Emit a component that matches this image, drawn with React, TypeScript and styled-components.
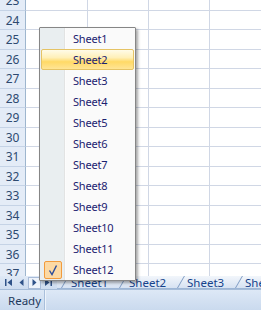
import React from 'react';
import styled, { createGlobalStyle } from 'styled-components';

const GlobalStyle = createGlobalStyle`
  html, body {
    margin: 0;
    padding: 0;
    background: #fff;
    overflow: hidden;
  }
`;

const Window = styled.div`
  position: relative;
  width: 261px;
  height: 310px;
  overflow: hidden;
  display: flex;
  flex-direction: column;
  font-family: "Noto Sans", "Liberation Sans", sans-serif;
`;

const Sheet = styled.div`
  flex: none;
  height: 276px;
  overflow: hidden;
`;

const Rows = styled.div`
  margin-top: -9px;
`;

const Row = styled.div<{ $h: number }>`
  display: grid;
  grid-template-columns: 26px 62px 61px 61px 61px;
  height: ${p => p.$h}px;
`;

const RowHead = styled.div`
  box-sizing: border-box;
  background: #e4ecf7;
  border-right: 1px solid #9eb6ce;
  border-bottom: 1px solid #c5d3e6;
  color: #2e4a70;
  font-size: 12px;
  display: flex;
  align-items: center;
  justify-content: center;
`;

const Cell = styled.div`
  box-sizing: border-box;
  border-right: 1px solid #d0d7e5;
  border-bottom: 1px solid #d0d7e5;
`;

const TabBar = styled.div`
  flex: none;
  height: 13px;
  display: flex;
  background: linear-gradient(#dfe9f6, #cddcef);
`;

const Nav = styled.div`
  flex: none;
  width: 57px;
  display: flex;
  align-items: center;
  padding-left: 2px;
  box-sizing: border-box;
`;

const NavButton = styled.div<{ $hover?: boolean }>`
  width: 13px;
  height: 12px;
  box-sizing: border-box;
  display: flex;
  align-items: center;
  justify-content: center;
  border: 1px solid ${p => (p.$hover ? '#a9bcd8' : 'transparent')};
  background: ${p => (p.$hover ? '#eef3fa' : 'transparent')};
  color: #2f5288;
`;

const Tabs = styled.div`
  display: flex;
  flex: 1;
  overflow: hidden;
  border-bottom: 1px solid #9db6d6;
`;

const Tab = styled.div`
  position: relative;
  flex: none;
  width: 58px;
  box-sizing: border-box;
  padding-left: 14px;
  font-size: 11.5px;
  line-height: 13px;
  color: #15428b;
  background: linear-gradient(#f2f6fb, #d6e2f2);
  white-space: nowrap;

  &::before {
    content: '';
    position: absolute;
    left: 4px;
    bottom: 0;
    height: 12px;
    border-left: 1px solid #7f9cc4;
    transform: skewX(-30deg);
    transform-origin: bottom;
  }
`;

const StatusBar = styled.div`
  flex: none;
  height: 21px;
  box-sizing: border-box;
  border-top: 1px solid #a5bcd8;
  background: linear-gradient(#dde8f6, #cadaee);
  display: flex;
  align-items: center;
`;

const StatusText = styled.div`
  width: 45px;
  box-sizing: border-box;
  padding-left: 8px;
  height: 100%;
  display: flex;
  align-items: center;
  font-size: 11.5px;
  color: #1e395b;
  border-right: 1px solid #a9bfdb;
  box-shadow: 1px 0 0 #eef4fb;
`;

const Menu = styled.div`
  position: absolute;
  left: 39px;
  top: 27px;
  width: 97px;
  box-sizing: border-box;
  border: 1px solid #868686;
  border-radius: 1px;
  box-shadow: 2px 2px 3px rgba(0, 0, 0, 0.35);
  background: linear-gradient(
    to right,
    #e9eef0 0,
    #e9eef0 24px,
    #e2e3e3 24px,
    #e2e3e3 25px,
    #ffffff 25px,
    #fafafa 26px
  );
  display: flex;
  flex-direction: column;
`;

const Item = styled.div<{ $active?: boolean }>`
  height: 21px;
  box-sizing: border-box;
  margin: 0 1px;
  display: grid;
  grid-template-columns: 23px 1fr;
  align-items: center;
  border: 1px solid ${p => (p.$active ? '#e5c365' : 'transparent')};
  border-radius: 2px;
  background: ${p =>
    p.$active
      ? 'linear-gradient(#fffbe8 0%, #fff0b8 40%, #ffd966 62%, #ffe596 100%)'
      : 'transparent'};
`;

const Label = styled.span`
  padding-left: 8px;
  font-size: 11px;
  letter-spacing: -0.2px;
  color: #1b2170;
`;

const CheckBox = styled.div`
  width: 18px;
  height: 18px;
  margin-left: 2px;
  box-sizing: border-box;
  border: 1px solid #f29b3c;
  border-radius: 2px;
  background: #fcd9a4;
  display: flex;
  align-items: center;
  justify-content: center;
`;

const first = (
  <svg width="8" height="7" viewBox="0 0 8 7">
    <rect x="0" y="0" width="1.5" height="7" fill="currentColor" />
    <path d="M7 0 L2.5 3.5 L7 7 Z" fill="currentColor" />
  </svg>
);
const prev = (
  <svg width="5" height="7" viewBox="0 0 5 7">
    <path d="M4.5 0 L0.5 3.5 L4.5 7 Z" fill="currentColor" />
  </svg>
);
const next = (
  <svg width="5" height="7" viewBox="0 0 5 7">
    <path d="M0.5 0 L4.5 3.5 L0.5 7 Z" fill="currentColor" />
  </svg>
);
const last = (
  <svg width="8" height="7" viewBox="0 0 8 7">
    <path d="M1 0 L5.5 3.5 L1 7 Z" fill="currentColor" />
    <rect x="6.5" y="0" width="1.5" height="7" fill="currentColor" />
  </svg>
);

const rowNumbers = Array.from({ length: 16 }, (_, i) => 23 + i);
const sheets = Array.from({ length: 12 }, (_, i) => `Sheet${i + 1}`);

export default function App() {
  return (
    <>
      <GlobalStyle />
      <Window>
        <Sheet>
          <Rows>
            {rowNumbers.map(n => (
              <Row key={n} $h={n % 2 ? 20 : 19}>
                <RowHead>{n}</RowHead>
                <Cell />
                <Cell />
                <Cell />
                <Cell />
              </Row>
            ))}
          </Rows>
        </Sheet>
        <TabBar>
          <Nav>
            <NavButton>{first}</NavButton>
            <NavButton>{prev}</NavButton>
            <NavButton $hover>{next}</NavButton>
            <NavButton>{last}</NavButton>
          </Nav>
          <Tabs>
            <Tab>Sheet1</Tab>
            <Tab>Sheet2</Tab>
            <Tab>Sheet3</Tab>
            <Tab>Sheet4</Tab>
          </Tabs>
        </TabBar>
        <StatusBar>
          <StatusText>Ready</StatusText>
        </StatusBar>

        <Menu>
          {sheets.map((s, i) => (
            <Item key={s} $active={i === 1}>
              {i === 11 ? (
                <CheckBox>
                  <svg width="12" height="12" viewBox="0 0 12 12">
                    <path
                      d="M2.5 6.5 L5 10.5 L9.5 1.5"
                      fill="none"
                      stroke="#2a4c9a"
                      strokeWidth="1.4"
                    />
                  </svg>
                </CheckBox>
              ) : (
                <span />
              )}
              <Label>{s}</Label>
            </Item>
          ))}
        </Menu>
      </Window>
    </>
  );
}
